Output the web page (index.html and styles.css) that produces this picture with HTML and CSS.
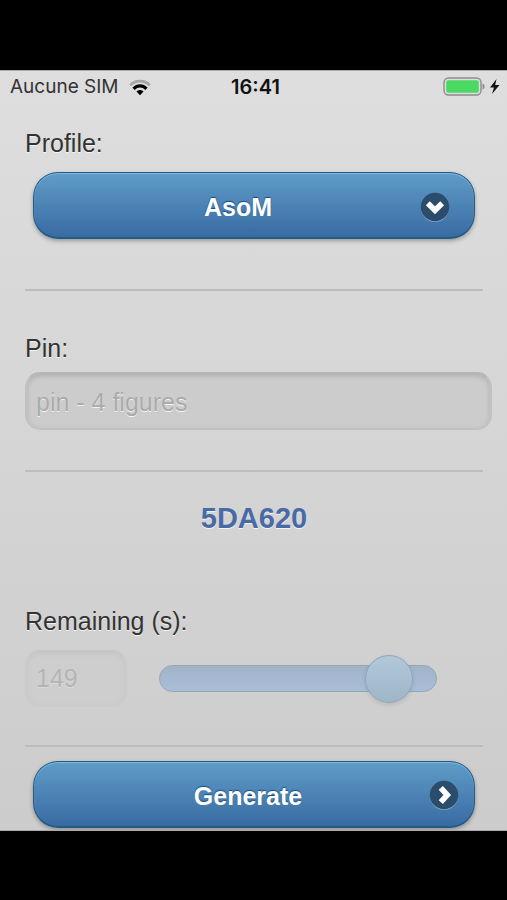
FILE: index.html
```html
<!DOCTYPE html>
<html lang="en">
<head>
<meta charset="utf-8">
<meta name="viewport" content="width=device-width, initial-scale=1">
<title>Generate</title>
<link rel="stylesheet" href="styles.css">
</head>
<body>
<div class="screen">
  <header class="status">
    <div class="carrier">
      <span>Aucune SIM</span>
      <svg class="wifi" width="22" height="17" viewBox="0 0 22 17" aria-hidden="true">
        <path d="M1.200 6.200C6.600 .8 15.400 .8 20.800 6.200" fill="none" stroke="#a6a6a6" stroke-width="2.800"/>
        <path d="M4.600 9.800C8.200 6 13.800 6 17.400 9.800" fill="none" stroke="#000" stroke-width="3.200"/>
        <path d="M7.500 12.600C9.600 10.600 12.400 10.600 14.500 12.600L11 16.300Z"/>
      </svg>
    </div>
    <span class="time">16:41</span>
    <div class="power">
      <svg width="58" height="20" viewBox="0 0 58 20" aria-hidden="true">
        <rect x="1" y="1" width="37" height="17" rx="4.500" fill="none" stroke="#8d8d8d" stroke-width="1.400"/>
        <rect x="3.200" y="3.200" width="32.600" height="12.600" rx="2" fill="#4bd964"/>
        <path d="M39.500 6.500C42.300 7 42.300 12 39.500 12.500Z" fill="#8d8d8d"/>
        <path d="M53.500 2L47 10.500H51L49 17L56.500 8H52.200Z" fill="#111"/>
      </svg>
    </div>
  </header>
  <form class="form">
    <label for="profile">Profile:</label>
    <div class="picker">
      <select id="profile" class="button"><option>AsoM</option></select>
      <svg class="badge" viewBox="0 0 30 30" aria-hidden="true">
        <circle cx="15" cy="16" r="14" fill="#8aa9c6"/>
        <circle cx="15" cy="15" r="14.200" fill="#2b4c6b"/>
        <path d="M7.800 11.300L15 18.300L22.200 11.300" fill="none" stroke="#fff" stroke-width="5.600"/>
      </svg>
    </div>
    <hr>
    <label for="pin">Pin:</label>
    <input id="pin" class="field" type="text" placeholder="pin - 4 figures">
    <hr>
    <output class="code">5DA620</output>
    <label for="seconds">Remaining (s):</label>
    <div class="remaining">
      <input id="seconds" class="field seconds" type="text" value="149" disabled>
      <div class="track">
        <input type="range" min="0" max="180" value="149" aria-label="Remaining (s)" disabled>
      </div>
    </div>
    <hr>
    <button class="button generate" type="button">Generate
      <svg class="badge" viewBox="0 0 30 30" aria-hidden="true">
        <circle cx="15" cy="16" r="14" fill="#8aa9c6"/>
        <circle cx="15" cy="15" r="14.200" fill="#2b4c6b"/>
        <path d="M11.800 7.800L18.300 15L11.800 22.200" fill="none" stroke="#fff" stroke-width="5.600"/>
      </svg>
    </button>
  </form>
</div>
</body>
</html>
```
FILE: styles.css
```css
* { box-sizing: border-box; }

body {
  margin: 0;
  padding: 70px 0;
  background: #000;
  color: #333;
  font-family: "Liberation Sans", Arial, sans-serif;
  font-size: 25px;
  line-height: 30px;
}

.screen {
  overflow: hidden;
  border-top: 1px solid #aaa;
  border-bottom: 1px solid #aaa;
  background: linear-gradient(#dedede, #cccccc);
}

.status {
  display: grid;
  grid-template-columns: 1fr auto 1fr;
  align-items: center;
  height: 32px;
  padding: 0 6px 0 10px;
  font-family: Inter, sans-serif;
  font-size: 19px;
}

.carrier { display: flex; align-items: center; gap: 10px; }
.time { color: #111; font-size: 20px; font-weight: 600; }
.power { display: flex; justify-content: flex-end; }

.form {
  display: flex;
  flex-direction: column;
  padding: 25px 24px 2px 25px;
}

label {
  display: block;
  text-shadow: 0 1px 0 #f3f3f3;
}

hr {
  height: 2px;
  margin: 0;
  border: 0;
  background: #bdbdbd;
}

.picker {
  position: relative;
  margin: 14px 8px 50px 8px;
}

.picker + hr { margin-bottom: 42px; }

.button {
  display: block;
  width: 100%;
  height: 67px;
  margin: 0;
  border: 1px solid #245b80;
  border-bottom-width: 2px;
  border-radius: 25px;
  background: linear-gradient(#5f9cc8, #396ba3);
  box-shadow: inset 0 1px 1px #84b9df, 0 2px 4px rgba(0, 0, 0, .3);
  color: #fff;
  font: bold 25px/30px "Liberation Sans", Arial, sans-serif;
  text-align: center;
  text-shadow: 0 -1px 1px #194b7e;
}

select.button {
  appearance: none;
  padding: 4px 32px 0 0;
  text-align-last: center;
}

.badge {
  position: absolute;
  top: 20px;
  right: 25px;
  width: 30px;
  height: 30px;
}

.generate {
  position: relative;
  width: auto;
  align-self: stretch;
  margin: 14px 8px 0 8px;
  padding: 4px 12px 0 0;
}

.generate .badge { top: 18px; right: 15px; }

.field {
  height: 58px;
  margin: 9px -9px 40px 0;
  padding: 3px 9px 0;
  border: 2px solid #c2c2c2;
  border-top-color: #b5b5b5;
  border-radius: 15px;
  background: #cccccc;
  box-shadow: inset 0 2px 5px rgba(0, 0, 0, .15);
  color: #333;
  font: 25px/30px "Liberation Sans", Arial, sans-serif;
  text-shadow: 0 1px 0 #f3f3f3;
}

.field::placeholder { color: #aaa; opacity: 1; }

.code {
  margin: 31px 0 73px;
  color: #486ba5;
  font-size: 29px;
  font-weight: bold;
  text-align: center;
  text-shadow: 0 1px 0 #f3f3f3;
}

.remaining {
  display: flex;
  align-items: center;
  gap: 32px;
  margin: 14px 46px 38px 0;
}

.seconds {
  flex: none;
  width: 102px;
  height: 57px;
  margin: 0;
  padding-top: 0;
  color: #777;
  opacity: .3;
}

.track {
  display: flex;
  flex: 1;
  align-items: center;
  height: 27px;
  border: 1px solid #94a6b6;
  border-radius: 14px;
  background: linear-gradient(#a0b3c7, #a9bed8);
}

.track input {
  flex: 1;
  min-width: 0;
  height: 48px;
  margin: 0 -25px;
  appearance: none;
  background: none;
}

.track input::-webkit-slider-thumb {
  width: 48px;
  height: 48px;
  appearance: none;
  border: 1px solid #90a5b6;
  border-radius: 50%;
  background: linear-gradient(#b1c8da, #9fb5c8);
  box-shadow: 0 2px 4px rgba(0, 0, 0, .1);
}
```
